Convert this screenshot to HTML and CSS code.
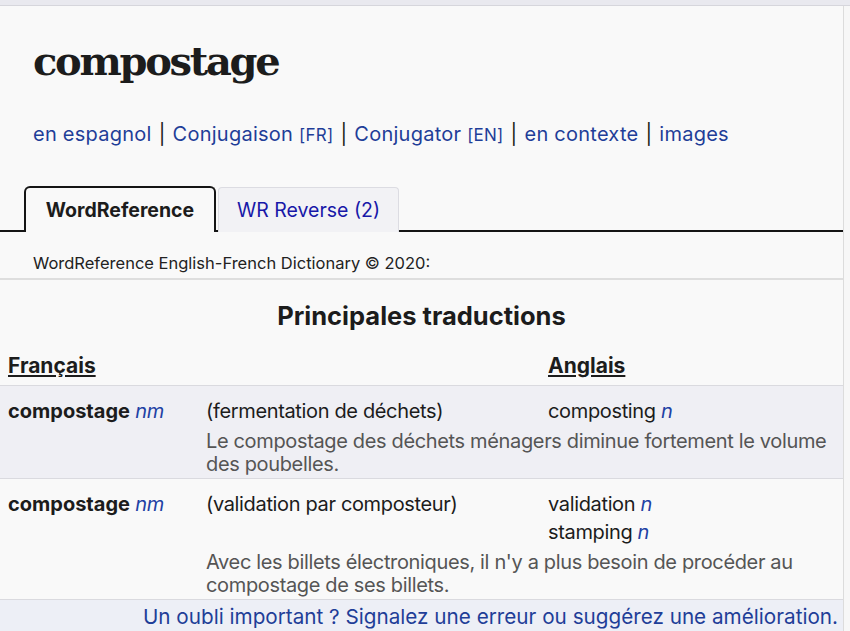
FILE: index.html
```html
<!DOCTYPE html>
<html lang="fr">
	<head>
		<meta charset="utf-8" />
		<title>compostage - WordReference</title>
		<link rel="stylesheet" href="styles.css">
	</head>
	<body>
		<div class="topbar"></div>
		<div class="page">
			<h1 class="headword">compostage</h1>
			<p class="otherlinks">
				<a href="#">en espagnol</a><span class="sep">|</span><a href="#">Conjugaison <small>[FR]</small></a><span class="sep">|</span><a href="#">Conjugator <small>[EN]</small></a><span class="sep">|</span><a href="#">en contexte</a><span class="sep">|</span><a href="#">images</a>
			</p>
			<div class="tabs">
				<span class="tab active">WordReference</span>
				<a class="tab" href="#">WR Reverse (2)</a>
			</div>
			<div class="dictname">WordReference English-French Dictionary © 2020:</div>
			<table class="wrd">
				<tr>
					<td colspan="3" class="wrtitle">Principales traductions</td>
				</tr>
				<tr class="langHeader">
					<td class="c1"><span>Français</span></td>
					<td class="c2"></td>
					<td class="c3"><span>Anglais</span></td>
				</tr>
				<tr class="odd first">
					<td class="c1"><strong>compostage</strong> <em>nm</em></td>
					<td class="c2">(fermentation de déchets)</td>
					<td class="c3">composting <em>n</em></td>
				</tr>
				<tr class="odd ex last">
					<td></td>
					<td colspan="2" class="frex">Le compostage des déchets ménagers diminue fortement le volume des poubelles.</td>
				</tr>
				<tr class="even first">
					<td class="c1"><strong>compostage</strong> <em>nm</em></td>
					<td class="c2">(validation par composteur)</td>
					<td class="c3">validation <em>n</em></td>
				</tr>
				<tr class="even">
					<td></td>
					<td></td>
					<td class="c3">stamping <em>n</em></td>
				</tr>
				<tr class="even ex last">
					<td></td>
					<td colspan="2" class="frex">Avec les billets électroniques, il n'y a plus besoin de procéder au compostage de ses billets.</td>
				</tr>
				<tr class="more">
					<td colspan="3"><a href="#">Un oubli important ? Signalez une erreur ou suggérez une amélioration.</a></td>
				</tr>
			</table>
		</div>
	</body>
</html>
```

FILE: styles.css
```css
* {
	padding: 0;
	margin: 0;
	box-sizing: border-box;
}

body {
	background: #f7f7f7;
	color: #1c1c1c;
	font-family: Inter, "Liberation Sans", sans-serif;
	font-size: 20px;
	line-height: 23px;
	overflow: hidden;
}

a {
	color: #1f3e98;
	text-decoration: none;
}

.topbar {
	height: 6px;
	background: #e9e9ef;
	border-bottom: 1px solid #d6d6dc;
}

.page {
	width: 844px;
	min-height: 625px;
	background: #f9f9f9;
	border-right: 1px solid #dcdcdc;
}

.headword {
	font-family: "DejaVu Serif", serif;
	font-weight: bold;
	font-size: 40px;
	letter-spacing: -2.3px;
	line-height: 50px;
	padding: 30px 0 0 33px;
	color: #1c1c1c;
}

.otherlinks {
	padding: 37px 0 0 33px;
	line-height: 23px;
	color: #1a1a1a;
	letter-spacing: 0.25px;
}

.otherlinks small {
	font-size: 17px;
}

.sep {
	margin: 0 7px;
}

.tabs {
	display: flex;
	align-items: flex-end;
	margin-top: 40px;
	padding-left: 24px;
	border-bottom: 2px solid #151515;
	height: 45px;
}

.tab {
	display: block;
	height: 45px;
	line-height: 44px;
	font-size: 19.5px;
	text-align: center;
	margin-bottom: -2px;
}

.tab.active {
	width: 192px;
	font-weight: bold;
	border: 2px solid #151515;
	border-bottom: none;
	border-radius: 6px 6px 0 0;
	background: #f9f9f9;
	height: 46px;
}

.tab + .tab {
	width: 181px;
	margin-left: 2px;
	color: #1818a8;
	background: #f2f2f5;
	border: 1px solid #dcdce2;
	border-bottom: none;
	border-radius: 4px 4px 0 0;
	height: 45px;
}

.dictname {
	font-size: 16.5px;
	padding: 20px 0 0 33px;
	height: 48px;
	border-bottom: 2px solid #dedede;
	color: #222;
}

.wrd {
	width: 100%;
	border-collapse: collapse;
	letter-spacing: -0.35px;
}

.wrd td {
	vertical-align: top;
}

.wrtitle {
	text-align: center;
	font-weight: bold;
	font-size: 25.5px;
	letter-spacing: 0;
	padding: 24px 0 0;
	height: 58px;
}

.langHeader td {
	font-weight: bold;
	font-size: 21px;
	letter-spacing: 0;
	padding-top: 16px;
	padding-bottom: 8px;
	border-bottom: 1px solid #dadadf;
}

.langHeader span {
	text-decoration: underline;
}

.c1 {
	width: 206px;
	padding-left: 8px;
}

.c2 {
	width: 342px;
}

.wrd strong {
	letter-spacing: 0;
}

.wrd em {
	color: #2141a4;
}

.wrd tr.even td, .wrd tr.odd td {
	padding-top: 5px;
}

.wrd tr.first td {
	padding-top: 14px;
}

.wrd tr.last td {
	padding-bottom: 4px;
	border-bottom: 1px solid #dadadf;
}

.odd {
	background: #efeff4;
}

.wrd tr td.frex {
	color: #555;
	padding-right: 12px;
	padding-top: 7px;
	padding-bottom: 2px;
}

.more td {
	text-align: right;
	font-size: 20.7px;
	letter-spacing: 0;
	padding: 5px 5px 6px 0;
	background: #edeff6;
}

.more a {
	color: #1f3e98;
}
```
